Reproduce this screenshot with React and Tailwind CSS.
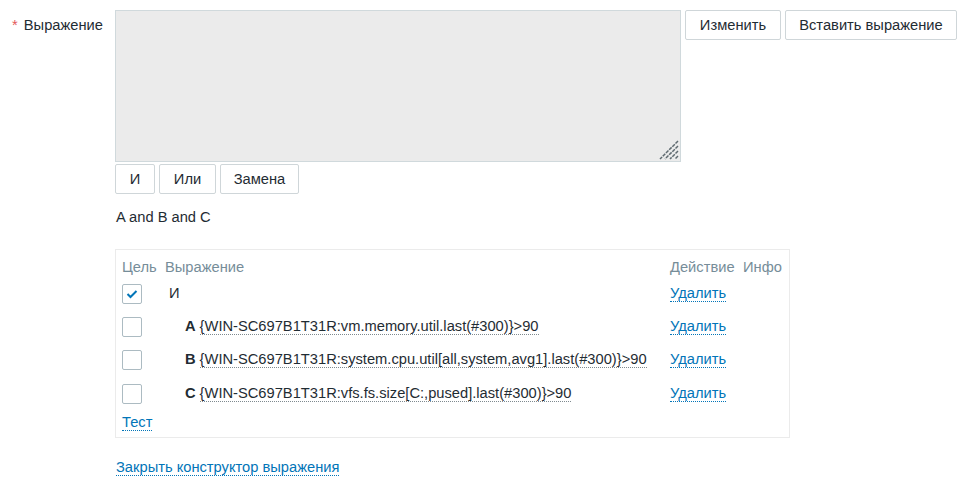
const rows = [
  { letter: 'A', expr: '{WIN-SC697B1T31R:vm.memory.util.last(#300)}>90', h: 'h-[33px]' },
  { letter: 'B', expr: '{WIN-SC697B1T31R:system.cpu.util[all,system,avg1].last(#300)}>90', h: 'h-[33px]' },
  { letter: 'C', expr: '{WIN-SC697B1T31R:vfs.fs.size[C:,pused].last(#300)}>90', h: 'h-[35px]' },
];

function Btn({ children, w }) {
  return (
    <button
      className={`h-[30px] ${w} bg-white border border-[#cfd6d9] rounded-[2px] text-[14.7px] text-[#1f2c33] leading-none`}
    >
      {children}
    </button>
  );
}

function Check({ checked }) {
  return (
    <span className="w-[20px] h-[20px] border border-[#acbbc2] rounded-[2px] bg-white flex items-center justify-center">
      {checked && (
        <svg width="12" height="10" viewBox="0 0 12 10">
          <path d="M1.5 5 L4.5 8 L10.5 2" fill="none" stroke="#0275b8" strokeWidth="2" />
        </svg>
      )}
    </span>
  );
}

function Link({ children }) {
  return (
    <span className="text-[#0275b8] border-b border-dotted border-[#0275b8] leading-[16px]">{children}</span>
  );
}

export default function App() {
  return (
    <div className="bg-white w-[969px] h-[489px] font-['Liberation_Sans',Arial,sans-serif] text-[14.7px] text-[#1f2c33]">
      <div className="flex pt-[10px]">
        <div className="w-[103px] text-right pt-[6px] leading-[18px] whitespace-nowrap">
          <span className="text-[#e45959] mr-[6px]">*</span>Выражение
        </div>
        <div className="ml-[12px]">
          <div className="flex gap-[4px]">
            <div className="relative">
              <textarea
                readOnly
                className="block w-[566px] h-[152px] bg-[#ebebeb] border border-[#d0d9dc] outline-none resize-none"
              />
              <svg className="absolute right-[2px] bottom-[2px]" width="20" height="20" viewBox="0 0 20 20">
                <g stroke="#5f6a70" strokeWidth="1.5" strokeDasharray="3.5 1">
                  <line x1="19" y1="1" x2="1" y2="19" />
                  <line x1="19" y1="6" x2="6" y2="19" />
                  <line x1="19" y1="11" x2="11" y2="19" />
                  <line x1="19" y1="16" x2="16" y2="19" />
                </g>
              </svg>
            </div>
            <div className="flex gap-[4px] items-start">
              <Btn w="w-[96px]">Изменить</Btn>
              <Btn w="w-[172px]">Вставить выражение</Btn>
            </div>
          </div>
          <div className="flex gap-[4px] mt-[2px]">
            <Btn w="w-[40px]">И</Btn>
            <Btn w="w-[57px]">Или</Btn>
            <Btn w="w-[79px]">Замена</Btn>
          </div>
          <div className="mt-[14px] leading-[18px] pl-[1px]">A and B and C</div>

          {/* конструктор */}
          <div className="mt-[23px] w-[675px] border border-[#ebebeb] pt-[8px] pb-[6px] pl-[6px]">
            <div className="grid grid-cols-[43px_505px_73px_1fr] h-[19px] leading-[18px] text-[#768d99]">
              <div>Цель</div>
              <div>Выражение</div>
              <div>Действие</div>
              <div>Инфо</div>
            </div>
            <div className="grid grid-cols-[43px_505px_73px_1fr] h-[33px] items-center">
              <Check checked />
              <div className="pl-[4px]">И</div>
              <div><Link>Удалить</Link></div>
              <div />
            </div>
            {rows.map((r) => (
              <div key={r.letter} className={`grid grid-cols-[43px_505px_73px_1fr] ${r.h} items-center`}>
                <Check />
                <div className="pl-[20px] whitespace-nowrap">
                  <span className="font-bold mr-[4px]">{r.letter}</span>
                  <span className="border-b border-dotted border-[#7f8a8f] leading-[16px]">{r.expr}</span>
                </div>
                <div><Link>Удалить</Link></div>
                <div />
              </div>
            ))}
            <div className="h-[18px] leading-[18px] mt-[2px]">
              <Link>Тест</Link>
            </div>
          </div>

          <div className="mt-[20px] leading-[18px] pl-[1px]">
            <Link>Закрыть конструктор выражения</Link>
          </div>
        </div>
      </div>
    </div>
  );
}
